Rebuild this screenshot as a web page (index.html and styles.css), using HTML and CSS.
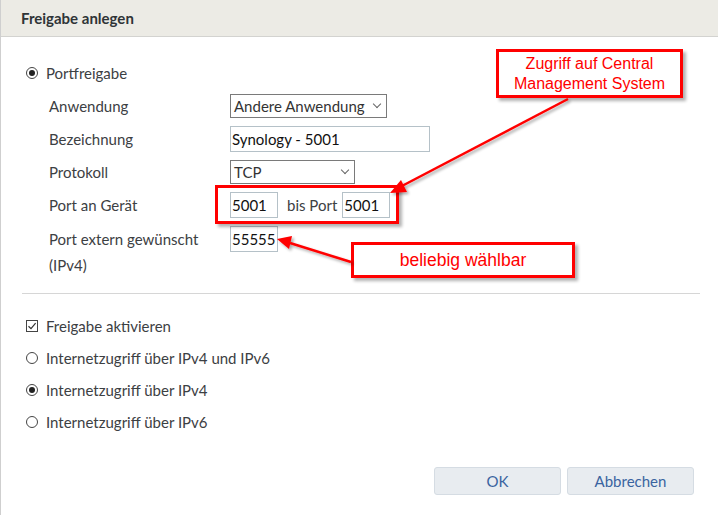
FILE: index.html
```html
<!DOCTYPE html>
<html lang="de">
<head>
<meta charset="utf-8">
<link rel="stylesheet" href="styles.css">
</head>
<body>
<div class="dialog">
  <div class="header">Freigabe anlegen</div>
  <div class="content">
    <div class="option top"><span class="radio on"></span>Portfreigabe</div>
    <div class="form">
      <div class="label">Anwendung</div>
      <div class="field"><div class="select sel-app">Andere Anwendung<span class="chev"></span></div></div>
      <div class="label">Bezeichnung</div>
      <div class="field"><div class="input inp-name">Synology - 5001</div></div>
      <div class="label">Protokoll</div>
      <div class="field"><div class="select sel-proto">TCP<span class="chev"></span></div></div>
      <div class="label">Port an Gerät</div>
      <div class="field ports"><div class="input inp-port">5001</div><span class="bis">bis Port</span><div class="input inp-port">5001</div></div>
      <div class="label wrap">Port extern gewünscht (IPv4)</div>
      <div class="field ext"><div class="input inp-port">55555</div></div>
    </div>
    <div class="sep"></div>
    <div class="option"><span class="check"><svg width="12" height="12" viewBox="0 0 12 12"><rect x="0.5" y="0.5" width="11" height="11" fill="#fff" stroke="#444"/><path d="M2.5 6.2 L5 8.6 L9.6 3.2" fill="none" stroke="#333" stroke-width="1.2"/></svg></span>Freigabe aktivieren</div>
    <div class="option"><span class="radio"></span>Internetzugriff über IPv4 und IPv6</div>
    <div class="option"><span class="radio on"></span>Internetzugriff über IPv4</div>
    <div class="option"><span class="radio"></span>Internetzugriff über IPv6</div>
    <div class="buttons">
      <button class="btn">OK</button>
      <button class="btn">Abbrechen</button>
    </div>
  </div>

  <div class="note note-cms">Zugriff auf Central<br>Management System</div>
  <div class="note note-port"></div>
  <div class="note note-free">beliebig wählbar</div>
  <svg class="arrows" width="718" height="515" viewBox="0 0 718 515">
    <defs>
      <filter id="sh" x="-20%" y="-20%" width="140%" height="140%">
        <feGaussianBlur in="SourceAlpha" stdDeviation="1.5"/>
        <feOffset dx="2" dy="2"/>
        <feComponentTransfer><feFuncA type="linear" slope="0.35"/></feComponentTransfer>
        <feMerge><feMergeNode/><feMergeNode in="SourceGraphic"/></feMerge>
      </filter>
    </defs>
    <g filter="url(#sh)" fill="#ff0000" stroke="#ff0000">
      <line x1="568" y1="99" x2="400" y2="187" stroke-width="2.5"/>
      <polygon points="390,193 401,180 407,192" stroke="none"/>
      <line x1="351" y1="262" x2="290" y2="243" stroke-width="2.5"/>
      <polygon points="277,239 292,236 289,249" stroke="none"/>
    </g>
  </svg>
</div>
</body>
</html>
```
FILE: styles.css
```css
* { box-sizing: border-box; }
html, body { margin: 0; padding: 0; background: #fff; }
body {
  width: 718px;
  height: 515px;
  overflow: hidden;
  font-family: "Lato", "Noto Sans", sans-serif;
  font-size: 15px;
  color: #3c4043;
}
.dialog {
  position: relative;
  width: 718px;
  height: 515px;
  border-left: 1px solid #cfcfcf;
}
.header {
  height: 37px;
  background: #ecebe5;
  border-bottom: 1px solid #d3d3d0;
  padding: 0 0 0 20px;
  line-height: 36px;
  font-weight: bold;
  font-size: 15px;
  color: #2f3437;
}
.content {
  padding: 25px 20px 0 25px;
}
.option {
  display: flex;
  align-items: center;
  height: 22px;
  margin-bottom: 10px;
}
.option.top { margin-bottom: 9px; }
.radio {
  width: 12px;
  height: 12px;
  border: 1px solid #444;
  border-radius: 50%;
  margin-right: 8px;
  display: flex;
  align-items: center;
  justify-content: center;
  background: #fff;
}
.radio.on::after {
  content: "";
  width: 6px;
  height: 6px;
  border-radius: 50%;
  background: #222;
}
.check { width: 12px; height: 12px; margin-right: 8px; display: flex; }
.form {
  display: grid;
  grid-template-columns: 181px auto;
  grid-auto-rows: auto;
  row-gap: 8px;
  padding-left: 23px;
  align-items: start;
}
.label { line-height: 26px; height: 25px; }
.label.wrap { width: 160px; height: auto; line-height: 26px; }
.field { display: flex; align-items: center; height: 25px; }
.select {
  height: 24px;
  border: 1px solid #7a7a7a;
  display: flex;
  align-items: center;
  padding: 0 6px 0 3px;
  color: #333;
  justify-content: space-between;
}
.sel-app { width: 157px; }
.sel-proto { width: 125px; }
.chev {
  width: 6px;
  height: 6px;
  border-right: 1px solid #666;
  border-bottom: 1px solid #666;
  transform: rotate(45deg);
  margin-top: -4px;
}
.input {
  height: 26px;
  border: 1px solid #b5c1c8;
  display: flex;
  align-items: center;
  padding: 0 0 0 1px;
  color: #111;
}
.inp-name { width: 200px; }
.inp-port { width: 48px; }
.ports { height: 26px; margin-top: 0; }
.bis { margin: 0 5px 0 9px; }
.ext { height: 26px; }
.sep {
  height: 1px;
  background: #d6d6d6;
  margin: 15px 0 21px -4px;
  width: 678px;
}
.buttons {
  display: flex;
  justify-content: flex-end;
  gap: 6px;
  margin-top: 34px;
  padding-right: 4px;
}
.btn {
  width: 127px;
  height: 28px;
  background: #e8ecf0;
  border: 1px solid #d5dce3;
  border-radius: 3px;
  color: #3a64a0;
  font-family: inherit;
  font-size: 15px;
}
.note {
  position: absolute;
  border: 3px solid #ff0000;
  background: #fff;
  color: #ff0000;
  font-family: "Liberation Sans", Arial, sans-serif;
  text-align: center;
  box-shadow: 3px 3px 3px rgba(0,0,0,0.3);
}
.note-cms {
  left: 495px;
  top: 49px;
  width: 187px;
  height: 49px;
  font-size: 16px;
  line-height: 20px;
  padding-top: 2px;
}
.note-port {
  left: 214px;
  top: 185px;
  width: 184px;
  height: 39px;
  background: transparent;
}
.note-free {
  left: 350px;
  top: 242px;
  width: 224px;
  height: 36px;
  font-size: 17.5px;
  line-height: 30px;
}
.arrows { position: absolute; left: -1px; top: 0; pointer-events: none; }
```
